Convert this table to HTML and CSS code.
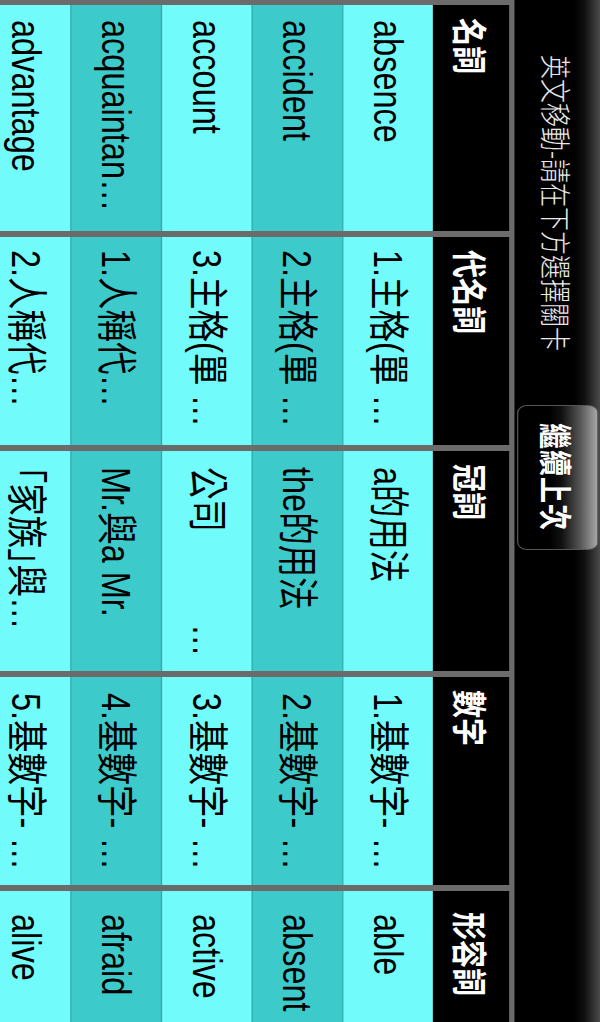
FILE: index.html
```html
<!DOCTYPE html>
<html lang="zh-Hant">
<head>
<meta charset="utf-8">
<title>英文移動</title>
<link rel="stylesheet" href="styles.css">
</head>
<body>
<div class="screen">
  <header class="topbar">
    <h1 class="title">英文移動-請在下方選擇關卡</h1>
    <div class="resume" role="button">繼續上次</div>
  </header>
  <main class="board">
    <section class="col c1">
      <div class="head">名詞</div>
      <div class="cell">absence</div>
      <div class="cell alt">accident</div>
      <div class="cell">account</div>
      <div class="cell alt">acquaintan…</div>
      <div class="cell">advantage</div>
    </section>
    <section class="col c2">
      <div class="head">代名詞</div>
      <div class="cell">1.主格(單 …</div>
      <div class="cell alt">2.主格(單 …</div>
      <div class="cell">3.主格(單 …</div>
      <div class="cell alt">1.人稱代…</div>
      <div class="cell">2.人稱代…</div>
    </section>
    <section class="col c3">
      <div class="head">冠詞</div>
      <div class="cell">a的用法</div>
      <div class="cell alt">the的用法</div>
      <div class="cell">公司<span class="gap"></span>…</div>
      <div class="cell alt">Mr.與a Mr.</div>
      <div class="cell">「家族」與…</div>
    </section>
    <section class="col c4">
      <div class="head">數字</div>
      <div class="cell">1.基數字- …</div>
      <div class="cell alt">2.基數字- …</div>
      <div class="cell">3.基數字- …</div>
      <div class="cell alt">4.基數字- …</div>
      <div class="cell">5.基數字- …</div>
    </section>
    <section class="col c5">
      <div class="head">形容詞</div>
      <div class="cell">able</div>
      <div class="cell alt">absent</div>
      <div class="cell">active</div>
      <div class="cell alt">afraid</div>
      <div class="cell">alive</div>
    </section>
  </main>
</div>
</body>
</html>
```

FILE: styles.css
```css
/* The app runs in landscape; the capture shows it turned a quarter
   clockwise, so the whole document flows in vertical-rl with
   sideways glyphs (landscape "top" = right edge of the capture). */
html {
  writing-mode: vertical-rl;
  text-orientation: sideways;
  margin: 0;
  padding: 0;
  overflow: hidden;
  background: #000;
}

body {
  margin: 0;
  padding: 0;
  inline-size: 1022px;
  block-size: 600px;
  overflow: hidden;
  font-family: "Liberation Sans", "Noto Sans CJK TC", sans-serif;
}

.screen {
  inline-size: 1022px;
  block-size: 470px;
  transform-origin: 100% 0;
  transform: scaleX(1.2766);
  overflow: hidden;
  background: #000;
  display: flex;
  flex-direction: column;
}

.topbar {
  block-size: 67px;
  flex: none;
  display: grid;
  grid-template-columns: 405px 145px;
  align-items: center;
  background: linear-gradient(to left, #4a4a4a 0, #111 12px, #000 20px);
}

.title {
  margin: 0;
  padding-inline-start: 55px;
  font-family: "Noto Sans CJK TC", sans-serif;
  font-size: 24px;
  font-weight: 300;
  color: #e9e9e9;
  white-space: nowrap;
}

.resume {
  box-sizing: border-box;
  block-size: 64px;
  display: flex;
  align-items: center;
  justify-content: center;
  border: 1px solid #555;
  border-radius: 8px;
  background: linear-gradient(to left, #a8a8a8 0%, #555 22%, #111 45%, #000 60%);
  color: #fff;
  font-family: "Noto Sans CJK TC", sans-serif;
  font-size: 26px;
  font-weight: bold;
  letter-spacing: 1px;
}

.board {
  flex: 1;
  min-block-size: 0;
  display: grid;
  grid-template-columns: 226px 208px 220px 208px minmax(0, 1fr);
  column-gap: 6px;
  padding-block-start: 4px;
  padding-inline-start: 5px;
  background: #6b6b6b;
  overflow: hidden;
}

.col {
  display: flex;
  flex-direction: column;
  min-inline-size: 0;
  overflow: hidden;
}

.head {
  flex: none;
  block-size: 60px;
  display: flex;
  align-items: center;
  padding-inline-start: 13px;
  background: #000;
  color: #fff;
  font-family: "Noto Sans CJK TC", sans-serif;
  font-size: 28px;
  font-weight: bold;
}

.cell {
  box-sizing: border-box;
  flex: none;
  block-size: 71px;
  line-height: 71px;
  padding-inline-start: 15px;
  background: #72fbfb;
  border-block-end: 1px solid #2fa9a9;
  color: #000;
  font-size: 32.5px;
  font-feature-settings: "halt";
  white-space: nowrap;
  overflow: hidden;
}

/* the fifth row runs off the bottom of the screen */
.cell:last-child {
  flex: 1 1 0;
  min-block-size: 0;
  border-block-end: 0;
}

.cell.alt {
  background: #3ccaca;
}

.c2 .cell { padding-inline-start: 13px; }
.c3 .cell { padding-inline-start: 16px; }
.c4 .cell { padding-inline-start: 16px; }
.c5 .cell { padding-inline-start: 23px; }
.c5 .head { padding-inline-start: 21px; }

.gap {
  display: inline-block;
  inline-size: 92px;
}
```
